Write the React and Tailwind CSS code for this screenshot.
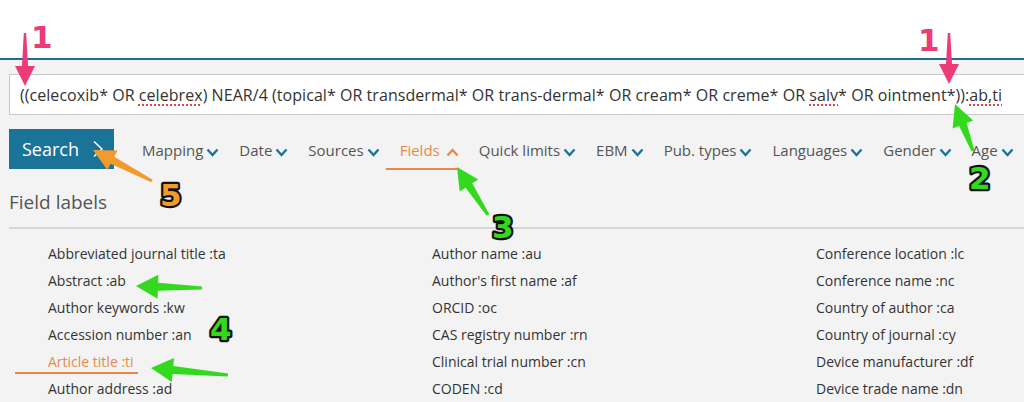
import React from 'react'

const query = [
  { t: '((celecoxib* OR ' },
  { t: 'celebrex', bad: true },
  { t: ') NEAR/4 (topical* OR transdermal* OR trans-dermal* OR cream* OR creme* OR ' },
  { t: 'salv', bad: true },
  { t: '* OR ointment*)):' },
  { t: 'ab,ti', bad: true },
]

const filters = ['Mapping', 'Date', 'Sources', 'Fields', 'Quick limits', 'EBM', 'Pub. types', 'Languages', 'Gender', 'Age']

const columns = [
  ['Abbreviated journal title :ta', 'Abstract :ab', 'Author keywords :kw', 'Accession number :an', 'Article title :ti', 'Author address :ad'],
  ["Author name :au", "Author's first name :af", 'ORCID :oc', 'CAS registry number :rn', 'Clinical trial number :cn', 'CODEN :cd'],
  ['Conference location :lc', 'Conference name :nc', 'Country of author :ca', 'Country of journal :cy', 'Device manufacturer :df', 'Device trade name :dn'],
]

function Chevron({ up, active }) {
  return (
    <svg width="13" height="9" viewBox="0 0 13 9" className="ml-[3px] mt-[4px]">
      <polyline
        points={up ? '1.5,7.5 6.5,2 11.5,7.5' : '1.5,1.5 6.5,7 11.5,1.5'}
        fill="none"
        stroke={active ? '#e8894a' : '#1a7399'}
        strokeWidth="2.4"
      />
    </svg>
  )
}

// block arrow, tapered from tail to head
function arrow(x1, y1, x2, y2, head = 18, hw = 11, tw = 1.5, sw = 4) {
  const dx = x2 - x1, dy = y2 - y1
  const len = Math.hypot(dx, dy)
  const ux = dx / len, uy = dy / len
  const px = -uy, py = ux
  const bx = x2 - ux * head, by = y2 - uy * head
  const pts = [
    [x1 + px * tw, y1 + py * tw],
    [bx + px * sw, by + py * sw],
    [bx + px * hw, by + py * hw],
    [x2, y2],
    [bx - px * hw, by - py * hw],
    [bx - px * sw, by - py * sw],
    [x1 - px * tw, y1 - py * tw],
  ]
  return pts.map(p => p[0].toFixed(1) + ',' + p[1].toFixed(1)).join(' ')
}

function Num({ x, y, children, fill, stroke = '#111', sw = 4.5 }) {
  return (
    <text
      x={x}
      y={y}
      fontFamily="'DejaVu Sans', sans-serif"
      fontWeight="bold"
      fontSize="31"
      fill={fill}
      stroke={stroke}
      strokeWidth={sw}
      strokeLinejoin="round"
      paintOrder="stroke"
    >
      {children}
    </text>
  )
}

function Annotations() {
  const pink = '#ec3b78'
  const green = '#33d91f'
  const orange = '#f39a2c'
  return (
    <svg className="absolute inset-0 pointer-events-none" width="1024" height="402" viewBox="0 0 1024 402">
      <line x1="386" y1="169" x2="458" y2="169" stroke="#e8894a" strokeWidth="2" />
      <line x1="15" y1="373" x2="138" y2="373" stroke="#e8894a" strokeWidth="2" />

      <polygon points={arrow(25, 33, 25, 86, 20, 10, 1.2, 3)} fill={pink} />
      <polygon points={arrow(949, 33, 949, 84, 20, 10, 1.2, 3)} fill={pink} />

      <polygon points={arrow(973, 151, 955, 104, 22, 11, 1.5, 4)} fill={green} />
      <polygon points={arrow(488, 215, 457, 167, 22, 11, 1.5, 4)} fill={green} />
      <polygon points={arrow(202, 288, 136, 286, 22, 12, 1.5, 4)} fill={green} />
      <polygon points={arrow(228, 375, 151, 368, 22, 12, 1.5, 4)} fill={green} />
      <polygon points={arrow(152, 181, 93, 150, 22, 11, 1.5, 4)} fill={orange} />

      <Num x="31" y="48" fill={pink} stroke="#fff" sw="4">1</Num>
      <Num x="918" y="51" fill={pink} stroke="#fff" sw="4">1</Num>
      <Num x="969" y="189" fill={green}>2</Num>
      <Num x="492" y="238" fill={green}>3</Num>
      <Num x="210" y="340" fill={green}>4</Num>
      <Num x="160" y="206" fill={orange}>5</Num>
    </svg>
  )
}

export default function App() {
  return (
    <div className="relative w-[1024px] h-[402px] overflow-hidden bg-[#f3f3f3] font-['Open_Sans',sans-serif] text-[#333]">
      <div className="h-[60px] bg-white border-b-2 border-[#1b6f8c]" />

      <div className="pl-[9px] pt-[14px]">
        <div className="w-[1040px] h-[41px] bg-white border border-[#c8c8c8] flex items-center pl-[10px] text-[16px]">
          <span className="whitespace-pre tracking-[0.05px]">
            {query.map((q, i) =>
              q.bad ? (
                <span key={i} className="underline decoration-dotted decoration-[#e0444a] decoration-2 underline-offset-[4px]">{q.t}</span>
              ) : (
                <span key={i}>{q.t}</span>
              )
            )}
          </span>
        </div>

        <div className="flex items-center mt-[14px] h-[40px]">
          <button className="w-[105px] h-[40px] shrink-0 bg-[#1a7399] text-white text-[18px] flex items-center pl-[13px]">
            Search
            <svg width="12" height="18" viewBox="0 0 12 18" className="ml-[13px]">
              <polyline points="2,1.5 10,9 2,16.5" fill="none" stroke="#fff" strokeWidth="1.5" />
            </svg>
          </button>
          <div className="flex items-center gap-[20px] ml-[28px] mt-[3px] text-[15px] text-[#555] whitespace-nowrap">
            {filters.map(f => (
              <div key={f} className={'flex items-center shrink-0 ' + (f === 'Fields' ? 'text-[#e8894a]' : '')}>
                {f === 'Fields' ? <span className="mr-[3px]">{f}</span> : <span>{f}</span>}
                <Chevron up={f === 'Fields'} active={f === 'Fields'} />
              </div>
            ))}
          </div>
        </div>

        <div className="mt-[20px] text-[19px] text-[#555] leading-[26px]">Field labels</div>

        <div className="mt-[12px] border-t-2 border-[#d6d6d6] pt-[11px] flex text-[14px] leading-[27px]">
          {columns.map((col, ci) => (
            <div key={ci} className="w-[384px] shrink-0 pl-[39px]">
              {col.map(item => (
                <div key={item} className={item === 'Article title :ti' ? 'text-[#e8894a]' : ''}>{item}</div>
              ))}
            </div>
          ))}
        </div>
      </div>

      <Annotations />
    </div>
  )
}
